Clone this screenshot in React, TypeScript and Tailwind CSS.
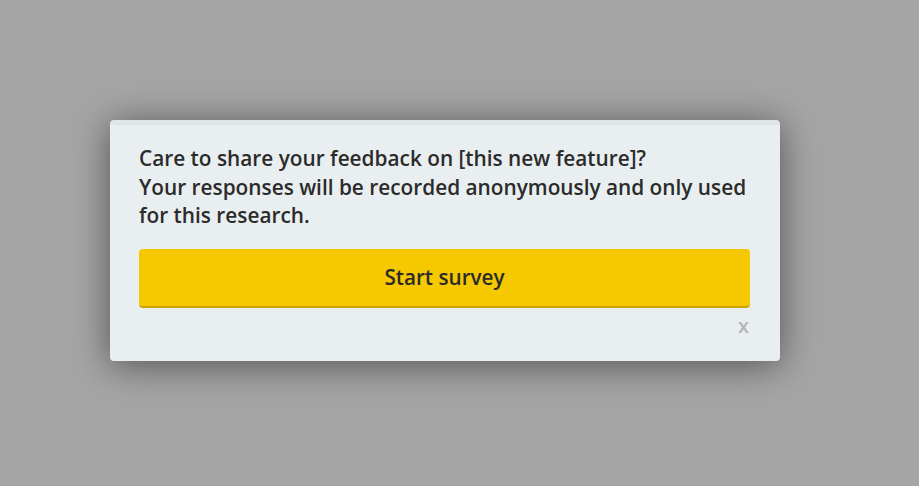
export default function App() {
  return (
    <div className="w-[919px] h-[486px] bg-[#a5a5a5] flex items-start justify-start" style={{ fontFamily: '"Open Sans", "Noto Sans", sans-serif' }}>
      <div className="mt-[120px] ml-[110px] w-[670px] h-[241px] bg-[#e9eff0] rounded-[4px] border-t-[5px] border-[#dfe6e6] shadow-[0_4px_36px_rgba(0,0,0,0.5)] px-[29px] pt-[19px] flex flex-col">
        <p className="text-[20.8px] leading-[28.5px] font-semibold text-[#2b2b2b]">
          Care to share your feedback on [this new feature]?
          <br />
          Your responses will be recorded anonymously and only used for this research.
        </p>
        <button className="mt-[19px] h-[59px] w-[611px] rounded-[4px] bg-[#f5c800] border-b-[2px] border-[#c9a300] text-[20.7px] font-semibold text-[#2b2b2b] pt-[2px]">
          Start survey
        </button>
        <div className="flex justify-end w-[611px]">
          <span className="text-[20px] font-semibold text-[#b3b6b6] leading-[36px] mr-[1px]">x</span>
        </div>
      </div>
    </div>
  );
}
